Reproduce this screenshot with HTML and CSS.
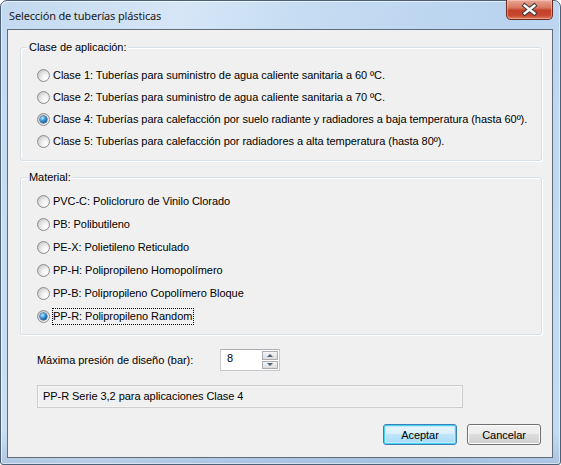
FILE: index.html
```html
<!DOCTYPE html>
<html lang="es">
<head>
<meta charset="utf-8">
<title>Selección de tuberías plásticas</title>
<link rel="stylesheet" href="styles.css">
</head>
<body>
<div class="window">
  <div class="titlebar">
    <span class="title">Selección de tuberías plásticas</span>
    <div class="close">
      <svg width="47" height="19" viewBox="0 0 47 19">
        <path d="M18.5 5.5 L28.5 13.5 M28.5 5.5 L18.5 13.5" stroke="#3b3b3b" stroke-width="4.6" stroke-linecap="square" fill="none"/>
        <path d="M18.5 5.5 L28.5 13.5 M28.5 5.5 L18.5 13.5" stroke="#ffffff" stroke-width="2.6" stroke-linecap="square" fill="none"/>
      </svg>
    </div>
  </div>
  <div class="client">
    <div class="group group-clase">
      <span class="legend">Clase de aplicación:</span>
      <div class="row"><span class="radio"></span><span class="label">Clase 1: Tuberías para suministro de agua caliente sanitaria a 60 ºC.</span></div>
      <div class="row"><span class="radio"></span><span class="label">Clase 2: Tuberías para suministro de agua caliente sanitaria a 70 ºC.</span></div>
      <div class="row"><span class="radio checked"></span><span class="label">Clase 4: Tuberías para calefacción por suelo radiante y radiadores a baja temperatura (hasta 60º).</span></div>
      <div class="row"><span class="radio"></span><span class="label">Clase 5: Tuberías para calefacción por radiadores a alta temperatura (hasta 80º).</span></div>
    </div>
    <div class="group group-material">
      <span class="legend">Material:</span>
      <div class="row tall"><span class="radio"></span><span class="label">PVC-C: Policloruro de Vinilo Clorado</span></div>
      <div class="row tall"><span class="radio"></span><span class="label">PB: Polibutileno</span></div>
      <div class="row tall"><span class="radio"></span><span class="label">PE-X: Polietileno Reticulado</span></div>
      <div class="row tall"><span class="radio"></span><span class="label">PP-H: Polipropileno Homopolímero</span></div>
      <div class="row tall"><span class="radio"></span><span class="label">PP-B: Polipropileno Copolímero Bloque</span></div>
      <div class="row tall"><span class="radio checked"></span><span class="label focus">PP-R: Polipropileno Random</span></div>
    </div>
    <div class="pressure">
      <span class="pressure-label">Máxima presión de diseño (bar):</span>
      <div class="spin">
        <span class="spin-value">8</span>
        <div class="spin-arrows">
          <span class="spin-btn"><span class="tri up"></span></span>
          <span class="spin-btn"><span class="tri down"></span></span>
        </div>
      </div>
    </div>
    <div class="status">PP-R Serie 3,2 para aplicaciones Clase 4</div>
    <div class="buttons">
      <button class="btn default">Aceptar</button>
      <button class="btn">Cancelar</button>
    </div>
  </div>
</div>
</body>
</html>
```
FILE: styles.css
```css
html, body {
  margin: 0;
  padding: 0;
  background: #ffffff;
}
body {
  width: 561px;
  height: 465px;
  overflow: hidden;
  font-family: "Liberation Sans", Arial, sans-serif;
  font-size: 11px;
  letter-spacing: -0.05px;
  color: #000;
}
.window {
  box-sizing: border-box;
  width: 561px;
  height: 465px;
  border: 1px solid #4a6178;
  border-radius: 7px 7px 3px 3px;
  background:
    linear-gradient(180deg, rgba(255,255,255,0) 0, rgba(255,255,255,0) 430px, rgba(120,150,190,0.35) 464px),
    linear-gradient(100deg, #c3d9f0 0%, #d6e6f7 28%, #c4dbf2 50%, #b9d3ef 80%, #c6dcf2 100%);
  padding: 0 7px 6px 6px;
  display: flex;
  flex-direction: column;
  box-shadow: inset 1px 1px 0 rgba(255,255,255,0.6), inset -1px -1px 0 rgba(255,255,255,0.5);
}
.titlebar {
  height: 28px;
  display: flex;
  align-items: flex-start;
  flex-shrink: 0;
}
.title {
  font-family: "Noto Sans", "Open Sans", sans-serif;
  font-size: 11px;
  letter-spacing: -0.15px;
  color: #1b1b1b;
  margin-top: 7px;
  margin-left: 2px;
}
.close {
  margin-left: auto;
  margin-right: 0;
  margin-top: -1px;
  width: 47px;
  height: 20px;
  box-sizing: border-box;
  border: 1px solid #6b2a20;
  border-top: none;
  border-radius: 0 0 5px 5px;
  background: linear-gradient(180deg, #e9a899 0%, #d8785f 40%, #c4402a 55%, #c8462e 80%, #e07a5a 100%);
  box-shadow: inset 0 0 0 1px rgba(255,220,210,0.45);
  display: flex;
}
.client {
  flex: 1;
  background: #f0f0f0;
  border: 1px solid #5f6d7a;
  display: flex;
  flex-direction: column;
}
.group {
  position: relative;
  margin: 17px 10px 0 12px;
  border: 1px solid #d5dfe5;
  border-radius: 3px;
  box-shadow: inset 1px 1px 0 #ffffff, 1px 1px 0 #ffffff;
  padding-left: 16px;
}
.group-clase {
  height: 96px;
  padding-top: 16px;
}
.group-material {
  margin-top: 16px;
  height: 144px;
  padding-top: 12px;
}
.legend {
  position: absolute;
  top: -8px;
  left: 6px;
  padding: 0 2px;
  background: #f0f0f0;
  line-height: 15px;
}
.row {
  display: flex;
  align-items: center;
  height: 22px;
}
.row.tall {
  height: 23px;
}
.radio {
  box-sizing: border-box;
  width: 13px;
  height: 13px;
  border-radius: 50%;
  border: 1px solid #8d8d8d;
  background: radial-gradient(circle at 70% 70%, #ffffff 0%, #f0f0f0 35%, #cfcfcf 75%, #b9b9b9 100%);
  flex-shrink: 0;
  margin-right: 3px;
  display: flex;
  align-items: center;
  justify-content: center;
}
.radio.checked::after {
  content: "";
  width: 7px;
  height: 7px;
  border-radius: 50%;
  background: radial-gradient(circle at 35% 30%, #c6ebff 0%, #45a4e8 35%, #155c9e 70%, #0c3b6e 100%);
  box-shadow: 0 0 0 0.5px #13406e;
}
.label {
  white-space: nowrap;
  line-height: 15px;
}
.label.focus {
  outline: 1px dotted #000;
  outline-offset: 0;
  padding: 0 1px 0 0;
}
.pressure {
  display: flex;
  align-items: center;
  margin: 14px 0 0 29px;
  height: 22px;
}
.pressure-label {
  width: 183px;
}
.spin {
  box-sizing: border-box;
  width: 60px;
  height: 22px;
  border: 1px solid #c7c9cc;
  border-top-color: #abadb3;
  background: #fff;
  display: flex;
  justify-content: space-between;
  padding: 1px;
}
.spin-value {
  padding-left: 5px;
  line-height: 15px;
}
.spin-arrows {
  display: flex;
  flex-direction: column;
  width: 16px;
}
.spin-btn {
  box-sizing: border-box;
  height: 9px;
  border: 1px solid #a9aeb5;
  background: linear-gradient(180deg, #f4f4f4, #dcdcdc);
  display: flex;
  align-items: center;
  justify-content: center;
}
.spin-btn + .spin-btn {
  margin-top: 1px;
}
.tri {
  width: 0;
  height: 0;
  border-left: 3px solid transparent;
  border-right: 3px solid transparent;
}
.tri.up {
  border-bottom: 3px solid #4c607f;
}
.tri.down {
  border-top: 3px solid #4c607f;
}
.status {
  box-sizing: border-box;
  margin: 14px 0 0 29px;
  width: 426px;
  height: 23px;
  border: 1px solid #cccccc;
  box-shadow: inset 0 0 0 1px #f7f7f7;
  padding: 4px 0 0 5px;
  line-height: 13px;
}
.buttons {
  display: flex;
  justify-content: flex-end;
  gap: 10px;
  margin: 16px 11px 0 0;
}
.btn {
  box-sizing: border-box;
  width: 74px;
  height: 21px;
  font-family: "Liberation Sans", Arial, sans-serif;
  font-size: 11px;
  letter-spacing: -0.05px;
  color: #000;
  border: 1px solid #707070;
  border-radius: 3px;
  background: linear-gradient(180deg, #f2f2f2 0%, #ebebeb 45%, #dddddd 50%, #cfcfcf 100%);
  box-shadow: inset 0 0 0 1px #fcfcfc;
  padding: 0;
}
.btn.default {
  border-color: #3c7fb1;
  box-shadow: inset 0 0 0 1px #48d2f8, inset 0 0 0 2px #c0eafc;
  background: linear-gradient(180deg, #eaf6fd 0%, #d9f0fc 45%, #bee6fd 50%, #a7d9f5 100%);
}
```
